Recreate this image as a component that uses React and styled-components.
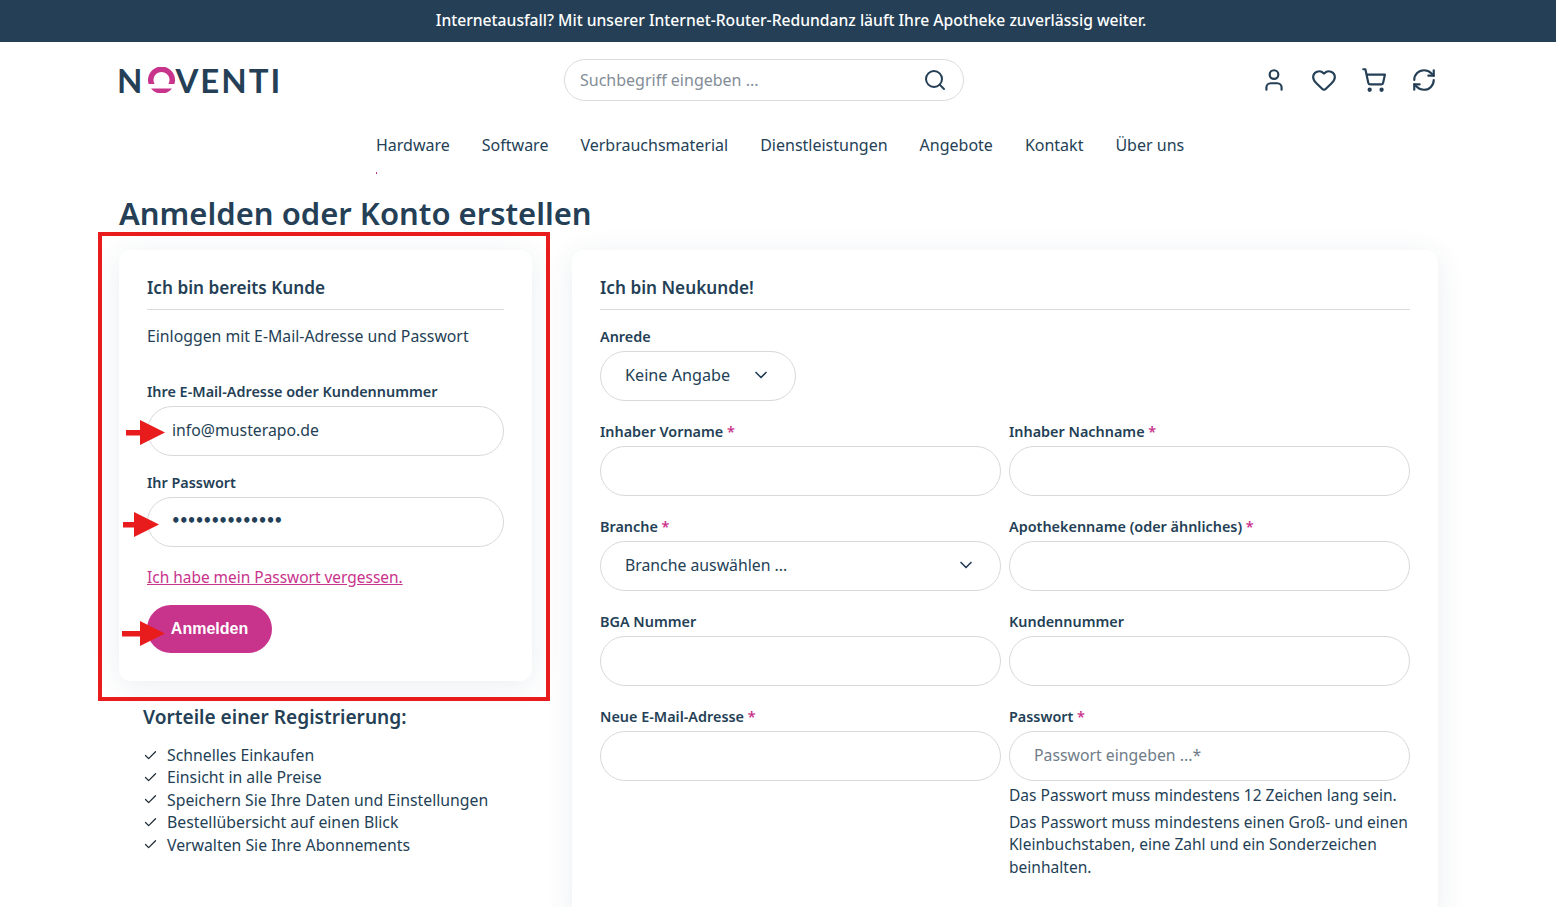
import styled, { createGlobalStyle } from "styled-components";
import { User, Heart, ShoppingCart, RefreshCw, Search, ChevronDown, Check } from "lucide-react";

const navItems = ["Hardware", "Software", "Verbrauchsmaterial", "Dienstleistungen", "Angebote", "Kontakt", "Über uns"];
const benefits = [
  "Schnelles Einkaufen",
  "Einsicht in alle Preise",
  "Speichern Sie Ihre Daten und Einstellungen",
  "Bestellübersicht auf einen Blick",
  "Verwalten Sie Ihre Abonnements",
];

const GlobalStyle = createGlobalStyle`
  html, body {
    margin: 0;
    padding: 0;
    height: 907px;
    overflow: hidden;
    background: #fff;
    color: #243f56;
    font-family: "Noto Sans", "Open Sans", sans-serif;
    font-size: 15.8px;
  }
  * { box-sizing: border-box; }
`;

const Banner = styled.div`
  height: 42px;
  background: #243f56;
  color: #fff;
  display: flex;
  align-items: center;
  justify-content: center;
  padding: 0 0 2px 26px;
  font-size: 15.67px;
  font-weight: 500;
`;

const Container = styled.div`
  width: 1319px;
  margin-left: 119px;
`;

const Header = styled(Container)`
  height: 76px;
  display: flex;
  align-items: center;
  position: relative;
`;

const Logo = styled.div`
  width: 445px;
  display: flex;
  align-items: center;
  font-family: "Lato", sans-serif;
  font-weight: 700;
  font-size: 33px;
  line-height: 1;
  letter-spacing: 2px;
  color: #243f56;
  margin-left: -2px;
  flex: none;
  & + * { margin-left: 2px; }
`;

const SearchBox = styled.div`
  width: 400px;
  height: 42px;
  border: 1px solid #dcdcdc;
  border-radius: 21px;
  display: flex;
  align-items: center;
  justify-content: space-between;
  padding: 0 16px 0 15px;
  color: #838d97;
  font-size: 16px;
`;

const IconBar = styled.div`
  margin-left: auto;
  margin-right: 1px;
  display: flex;
  gap: 24px;
  color: #243f56;
`;

const Nav = styled.nav`
  display: flex;
  gap: 32px;
  margin-left: 257px;
  height: 54px;
  padding-top: 16px;
  font-size: 16px;
  line-height: 22px;
  position: relative;
`;

const NavDot = styled.span`
  position: absolute;
  left: 0;
  top: 54px;
  width: 1px;
  height: 2px;
  background: #c8338c;
`;

const PageTitle = styled.h1`
  margin: 0;
  font-size: 31px;
  line-height: 44px;
  font-weight: 600;
  color: #243f56;
  height: 78px;
  padding-top: 19px;
`;

const Columns = styled(Container)`
  display: grid;
  grid-template-columns: 413px 866px;
  gap: 40px;
  align-items: start;
  position: relative;
`;

const Card = styled.section`
  background: #fff;
  border-radius: 12px;
  padding: 19px 28px 28px;
  box-shadow: 0 5px 30px rgba(36, 63, 86, 0.09);
`;

const CardTitle = styled.h2`
  margin: 0 0 12px;
  height: 41px;
  border-bottom: 1px solid #d9dcdf;
  font-size: 17.2px;
  line-height: 38px;
  font-weight: 600;
`;

const Intro = styled.p`
  margin: 0 0 31px;
  line-height: 28px;
`;

const FormBody = styled.div`
  padding-top: 4px;
`;

const Label = styled.label`
  display: block;
  font-size: 14.4px;
  font-weight: 600;
  line-height: 22px;
  height: 20px;
  margin-bottom: 5px;
  white-space: nowrap;
  & > span { color: #c8338c; }
`;

const Field = styled.div`
  margin-bottom: ${(p) => p.$gap ?? 20}px;
`;

const InputShell = styled.div`
  height: 50px;
  border: 1px solid #d9d9d9;
  border-radius: 25px;
  display: flex;
  align-items: center;
  justify-content: space-between;
  padding: 0 24px 2px;
  width: ${(p) => p.$width || "100%"};
  background: #fff;
  font-size: ${(p) => p.$size || "15.8px"};
  color: ${(p) => (p.$muted ? "#6f7c88" : "#243f56")};
`;

const Dots = styled.span`
  font-family: "DejaVu Sans", sans-serif;
  font-size: 15px;
  letter-spacing: -1.7px;
  font-weight: 700;
  margin-left: -1px;
`;

const ForgotLink = styled.a`
  display: block;
  color: #c8338c;
  font-size: 15.45px;
  text-decoration: underline;
  line-height: 22px;
  margin-bottom: 17px;
`;

const LoginButton = styled.button`
  width: 125px;
  height: 48px;
  border: 0;
  border-radius: 24px;
  background: #c8338c;
  color: #fff;
  font-family: "Liberation Sans", sans-serif;
  font-size: 16px;
  font-weight: 700;
`;

const Benefits = styled.div`
  padding: 24px 0 0 24px;
`;

const BenefitsTitle = styled.h3`
  margin: 0 0 15px;
  font-size: 19.1px;
  line-height: 24px;
  font-weight: 600;
`;

const BenefitList = styled.ul`
  list-style: none;
  margin: 0;
  padding: 0;
`;

const BenefitItem = styled.li`
  display: flex;
  align-items: center;
  gap: 9px;
  height: 22.4px;
  line-height: 22.4px;
  svg { color: #1d2b36; }
`;

const FormGrid = styled.div`
  display: grid;
  grid-template-columns: 1fr 1fr;
  column-gap: 8px;
`;

const HelpText = styled.p`
  margin: 3px 0 0;
  font-size: 15.55px;
  line-height: 22.5px;
  & + & { margin-top: 4px; }
`;

const Highlight = styled.div`
  position: absolute;
  left: -21px;
  top: -18px;
  width: 452px;
  height: 469px;
  border: 4px solid #e81c1c;
  pointer-events: none;
`;

const ArrowMark = styled.svg`
  position: absolute;
  left: ${(p) => p.$x}px;
  top: ${(p) => p.$y}px;
  pointer-events: none;
`;

const Arrow = ({ x, y, width }) => (
  <ArrowMark $x={x} $y={y} width={width} height="26" viewBox={`0 0 ${width} 26`}>
    <rect x="0" y="10" width={width - 20} height="5.5" fill="#e81c1c" />
    <polygon points={`${width - 25},0 ${width},12.5 ${width - 25},25`} fill="#e81c1c" />
  </ArrowMark>
);

const LogoRing = () => (
  <svg width="27" height="26" viewBox="0 0 27 26" style={{ margin: "0 0 0 4px" }}>
    <path d="M0.6 17 A13.5 13.5 0 1 1 26.4 17 L20.4 17 A8 8 0 1 0 6.6 17 Z" fill="#c8338c" />
    <path d="M3 21.5 L24 21.5 A13.5 13.5 0 0 1 3 21.5 Z" fill="#c8338c" />
  </svg>
);

const Required = () => <span> *</span>;

const App = () => {
  return (
    <>
      <GlobalStyle />
      <Banner>Internetausfall? Mit unserer Internet-Router-Redundanz läuft Ihre Apotheke zuverlässig weiter.</Banner>

      <Header>
        <Logo>N<LogoRing />VENTI</Logo>
        <SearchBox>
          <span>Suchbegriff eingeben ...</span>
          <Search size={24} strokeWidth={2} color="#243f56" />
        </SearchBox>
        <IconBar>
          <User size={26} strokeWidth={2} />
          <Heart size={26} strokeWidth={2} />
          <ShoppingCart size={26} strokeWidth={2} />
          <RefreshCw size={26} strokeWidth={2} />
        </IconBar>
      </Header>

      <Container>
        <Nav>
          {navItems.map((item) => <span key={item}>{item}</span>)}
          <NavDot />
        </Nav>
        <PageTitle>Anmelden oder Konto erstellen</PageTitle>
      </Container>

      <Columns>
        <div>
          <Card>
            <CardTitle>Ich bin bereits Kunde</CardTitle>
            <Intro>Einloggen mit E-Mail-Adresse und Passwort</Intro>
            <Field $gap={16}>
              <Label>Ihre E-Mail-Adresse oder Kundennummer</Label>
              <InputShell>info@musterapo.de</InputShell>
            </Field>
            <Field $gap={19}>
              <Label>Ihr Passwort</Label>
              <InputShell><Dots>••••••••••••••</Dots></InputShell>
            </Field>
            <ForgotLink>Ich habe mein Passwort vergessen.</ForgotLink>
            <LoginButton>Anmelden</LoginButton>
          </Card>
          <Benefits>
            <BenefitsTitle>Vorteile einer Registrierung:</BenefitsTitle>
            <BenefitList>
              {benefits.map((item) => (
                <BenefitItem key={item}>
                  <Check size={15} strokeWidth={2} />
                  {item}
                </BenefitItem>
              ))}
            </BenefitList>
          </Benefits>
        </div>

        <Card>
          <CardTitle>Ich bin Neukunde!</CardTitle>
          <FormBody>
            <Field>
              <Label>Anrede</Label>
              <InputShell $width="196px" $size="16.2px">Keine Angabe <ChevronDown size={20} strokeWidth={2} /></InputShell>
            </Field>
            <FormGrid>
              <Field>
                <Label>Inhaber Vorname<Required /></Label>
                <InputShell />
              </Field>
              <Field>
                <Label>Inhaber Nachname<Required /></Label>
                <InputShell />
              </Field>
              <Field>
                <Label>Branche<Required /></Label>
                <InputShell>Branche auswählen ... <ChevronDown size={20} strokeWidth={2} /></InputShell>
              </Field>
              <Field>
                <Label>Apothekenname (oder ähnliches)<Required /></Label>
                <InputShell />
              </Field>
              <Field>
                <Label>BGA Nummer</Label>
                <InputShell />
              </Field>
              <Field>
                <Label>Kundennummer</Label>
                <InputShell />
              </Field>
              <Field>
                <Label>Neue E-Mail-Adresse<Required /></Label>
                <InputShell />
              </Field>
              <Field>
                <Label>Passwort<Required /></Label>
                <InputShell $muted>Passwort eingeben ...*</InputShell>
                <HelpText>Das Passwort muss mindestens 12 Zeichen lang sein.</HelpText>
                <HelpText>Das Passwort muss mindestens einen Groß- und einen Kleinbuchstaben, eine Zahl und ein Sonderzeichen beinhalten.</HelpText>
              </Field>
            </FormGrid>
          </FormBody>
        </Card>

        <Highlight />
        <Arrow x={7} y={170} width={39} />
        <Arrow x={4} y={262} width={36} />
        <Arrow x={3} y={371} width={43} />
      </Columns>
    </>
  );
};

export default App;
